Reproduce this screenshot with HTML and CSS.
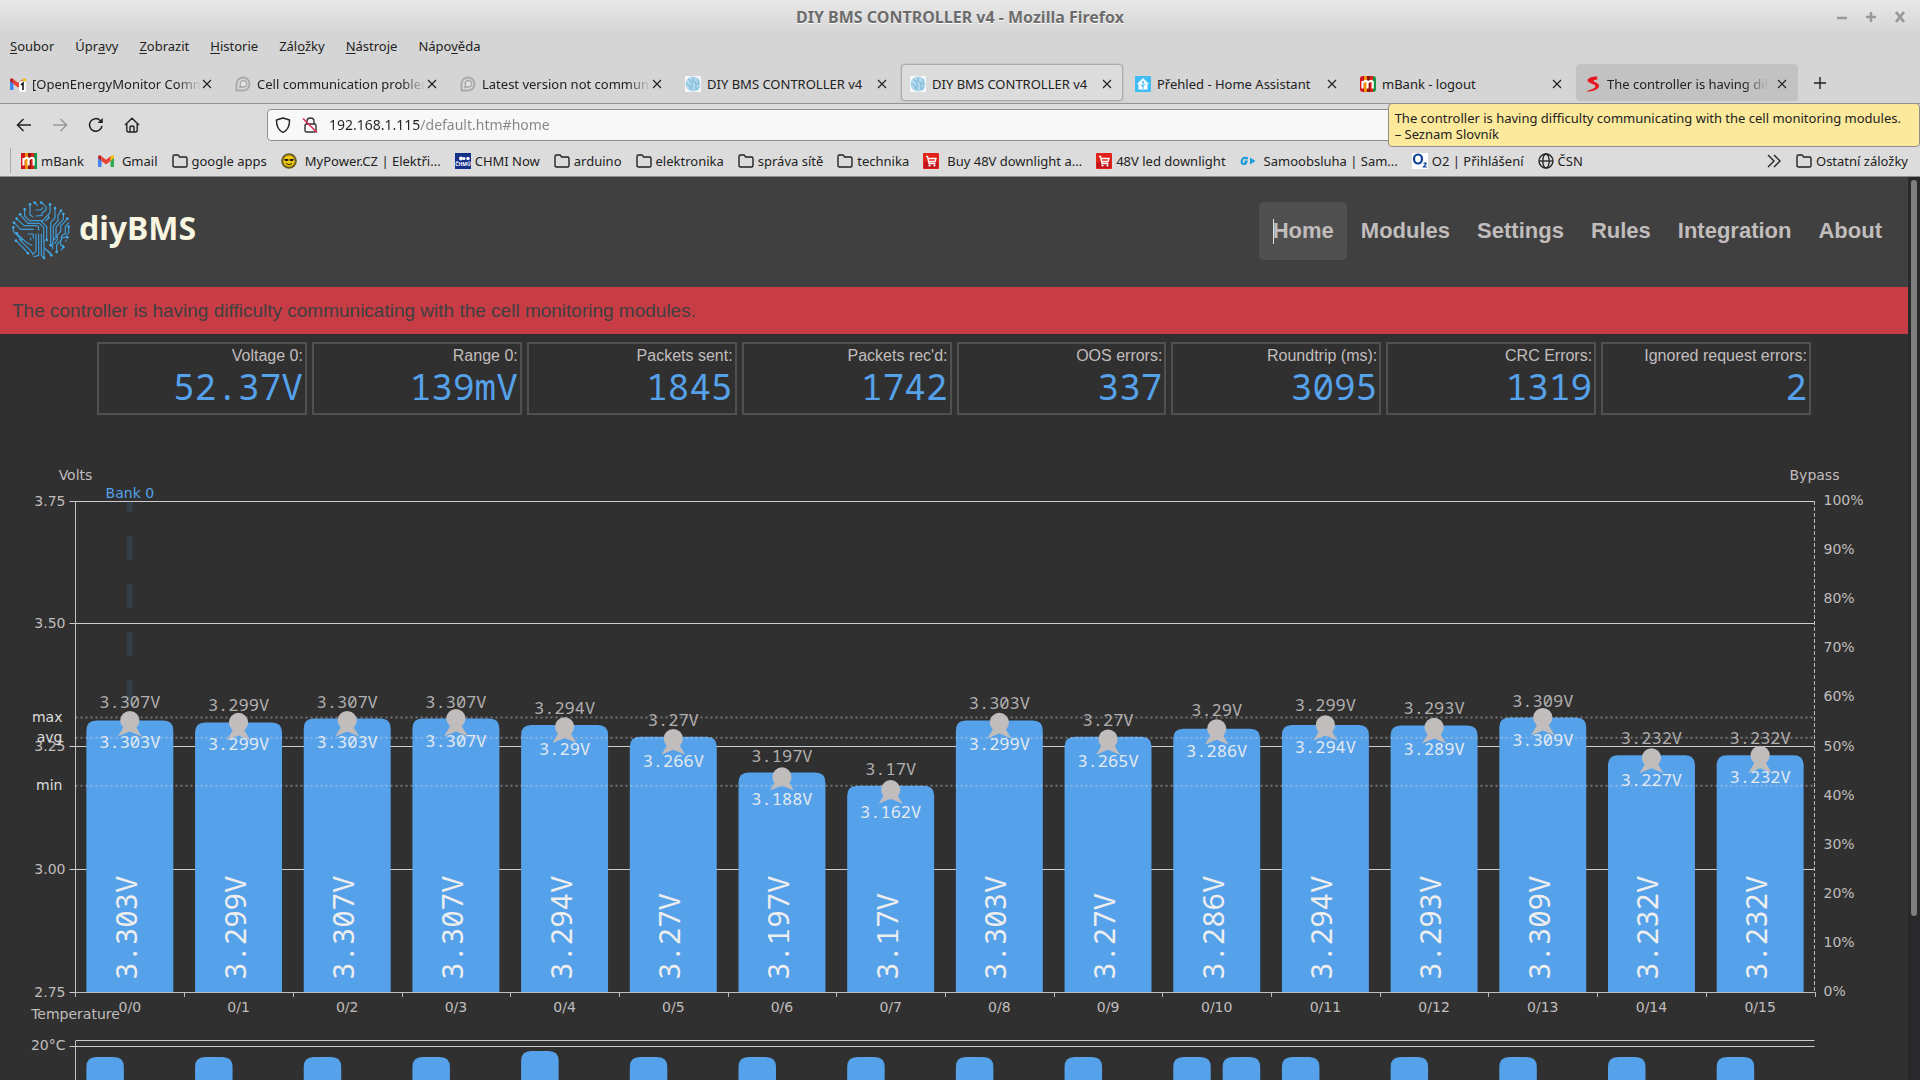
FILE: index.html
```html
<!DOCTYPE html>
<html lang="cs">
<head>
<meta charset="utf-8">
<title>DIY BMS CONTROLLER v4</title>
<link rel="stylesheet" href="styles.css">
</head>
<body>
<svg width="0" height="0" class="defs" aria-hidden="true">
  <symbol id="close" viewBox="0 0 16 16"><path d="M4 4l8 8M12 4l-8 8" fill="none" stroke="#222" stroke-width="1.2"/></symbol>
  <symbol id="folder" viewBox="0 0 16 16"><path d="M1 12.500V3.500Q1 2 2.500 2H5.500Q6.500 2 7 3L7.500 4H13.500Q15 4 15 5.500V12.500Q15 14 13.500 14H2.500Q1 14 1 12.500Z" fill="none" stroke="#222" stroke-width="1.400"/></symbol>
  <symbol id="gmail" viewBox="0 0 16 16"><path d="M0 3.500V14H3.500V7Z" fill="#4285f4"/><path d="M16 3.500V14H12.500V7Z" fill="#34a853"/><path d="M12.500 3.500L14 2.300Q16 2 16 4V5L12.500 8Z" fill="#fbbc04"/><path d="M3.500 3.200L8 6.700L12.500 3.200V8L8 11.400L3.500 8Z" fill="#ea4335"/><path d="M0 5V4Q0 2 2 2.300L3.500 3.200V8Z" fill="#c5221f"/></symbol>
  <symbol id="discourse" viewBox="0 0 16 16"><path d="M1.500 14.500V8A6.500 6.500 0 1 1 8 14.500Z" fill="#d8d8d8" stroke="#aaa" stroke-width="2"/><path d="M5 11.500L5.500 9A3.200 3.200 0 1 1 7.500 10.800Z" fill="#e4e4e4" stroke="#aaa" stroke-width="1.500"/></symbol>
  <symbol id="mbank" viewBox="0 0 16 16"><path d="M0 0H4V16H0Z" fill="#d3121f"/><path d="M4 0H7V16H4Z" fill="#f39200"/><path d="M7 0H10V16H7Z" fill="#8f1414"/><path d="M10 0H13V16H10Z" fill="#df2018"/><path d="M13 0H16V16H13Z" fill="#159447"/><path d="M2.500 12.500V5M2.500 7Q5.500 3.500 7.500 6V12.500M7.500 7Q10.500 3.500 12.700 6V12.500" fill="none" stroke="#fff" stroke-width="2.200"/></symbol>
  <symbol id="cart" viewBox="0 0 16 16"><rect width="16" height="16" rx="1" fill="#e2231a"/><path d="M1 9H15V15H1Z" fill="#c3161c"/><path d="M3 3.500H4.500L6 10.500H12.500M5 5.500H13L12 8.500H6" fill="none" stroke="#fff" stroke-width="1.300"/><circle cx="6.500" cy="12.500" r="1.100" fill="#fff"/><circle cx="11.500" cy="12.500" r="1.100" fill="#fff"/></symbol>
  <symbol id="circuit" viewBox="34 30 178 180">
    <g fill="none" stroke="#3f9bd6" stroke-width="3.600" stroke-linejoin="round" stroke-linecap="round">
      <path d="M90 43V74L98 80M104 38L112 46M124 38L138 50V60L126 70V76L108 78M108 60H122L128 54M150 44V68L128 92H106M165 54V84L152 98V166M74 58V78L88 92H122L140 110V150M60 74L84 100H118L131 113V155M50 86L72 107H112L116 112V120M42 98L62 118H100M40 112V124L66 150M50 130L80 158L96 166M48 152L70 174L84 190M58 148L86 176L98 190M84 132H100V144M92 144V150M108 132V184L98 194M116 132V196M124 132V196L132 204M102 200L116 196M132 204V172L154 196M132 172V152M140 180L152 190M145 74V84L138 92M148 82L142 88M183 62L174 76V92L160 108V150M190 72V88L168 112V142L158 154V176M202 86L192 98L182 108V124L172 136V150L164 160M206 98L196 110V130L184 138V150L170 164V186M206 112V128L198 136M202 142H188L182 152V166H190M198 150V154M190 172L184 180"/>
    </g>
    <g fill="#43a9ea">
      <circle cx="90" cy="43" r="4"/><circle cx="104" cy="38" r="4"/><circle cx="124" cy="38" r="4"/><circle cx="150" cy="43" r="4"/><circle cx="165" cy="54" r="4"/><circle cx="74" cy="58" r="4"/><circle cx="60" cy="73" r="4"/><circle cx="50" cy="86" r="4"/><circle cx="42" cy="98" r="4"/><circle cx="40" cy="112" r="4"/><circle cx="50" cy="130" r="4"/><circle cx="48" cy="152" r="4"/><circle cx="183" cy="62" r="4"/><circle cx="190" cy="72" r="4"/><circle cx="202" cy="86" r="4"/><circle cx="206" cy="110" r="4"/><circle cx="202" cy="142" r="4"/><circle cx="190" cy="171" r="4"/><circle cx="170" cy="186" r="4"/><circle cx="154" cy="196" r="4"/><circle cx="132" cy="204" r="4"/><circle cx="84" cy="190" r="4"/><circle cx="152" cy="166" r="4"/><circle cx="140" cy="150" r="4"/>
    </g>
  </symbol>
  <symbol id="diybms" viewBox="0 0 16 16"><rect width="16" height="16" fill="#f4f8fa"/><circle cx="8" cy="8" r="7.500" fill="#b4d9ec"/><path d="M3 3L7 6V14M8 1V5L11 7V14M13 3V9M1 7L5 10V13M14 11L12 14" fill="none" stroke="#6fb3d8" stroke-width="1"/></symbol>
</svg>

<header class="chrome">
  <div class="titlebar">
    <span class="window-title">DIY BMS CONTROLLER v4 - Mozilla Firefox</span>
    <div class="window-buttons">
      <button aria-label="Minimalizovat"><svg width="12" height="14" viewBox="0 0 12 14"><path d="M1 8H11" stroke="#999" stroke-width="2.500"/></svg></button>
      <button aria-label="Maximalizovat"><svg width="12" height="14" viewBox="0 0 12 14"><path d="M1 7H11M6 2V12" stroke="#999" stroke-width="2.500"/></svg></button>
      <button aria-label="Zavřít"><svg width="12" height="14" viewBox="0 0 12 14"><path d="M2 2L10 12M10 2L2 12" stroke="#999" stroke-width="2.800"/></svg></button>
    </div>
  </div>

  <nav class="menubar" aria-label="Nabídka">
    <button><u>S</u>oubor</button><button>Úpr<u>a</u>vy</button><button><u>Z</u>obrazit</button><button><u>H</u>istorie</button><button>Zál<u>o</u>žky</button><button><u>N</u>ástroje</button><button>Nápo<u>v</u>ěda</button>
  </nav>

  <div class="tabs">
    <div class="tab"><svg class="icon"><use href="#gmail"/><rect x="9" y="5" width="7" height="11" rx="2" fill="#fff"/><path d="M11 9L13 7V14" fill="none" stroke="#111" stroke-width="1.500"/></svg><button class="tab-label fade tight">[OpenEnergyMonitor Community]</button><button class="tab-close" aria-label="Zavřít panel"><svg class="icon"><use href="#close"/></svg></button></div>
    <div class="tab"><svg class="icon"><use href="#discourse"/></svg><button class="tab-label fade tight">Cell communication problems</button><button class="tab-close" aria-label="Zavřít panel"><svg class="icon"><use href="#close"/></svg></button></div>
    <div class="tab"><svg class="icon"><use href="#discourse"/></svg><button class="tab-label fade tight">Latest version not communicating</button><button class="tab-close" aria-label="Zavřít panel"><svg class="icon"><use href="#close"/></svg></button></div>
    <div class="tab"><svg class="icon"><use href="#diybms"/></svg><button class="tab-label">DIY BMS CONTROLLER v4</button><button class="tab-close" aria-label="Zavřít panel"><svg class="icon"><use href="#close"/></svg></button></div>
    <div class="tab active"><svg class="icon"><use href="#diybms"/></svg><button class="tab-label">DIY BMS CONTROLLER v4</button><button class="tab-close" aria-label="Zavřít panel"><svg class="icon"><use href="#close"/></svg></button></div>
    <div class="tab"><svg class="icon"><rect width="16" height="16" rx="1" fill="#41bdf5"/><path d="M8 2L14 8H12.500V13.500H3.500V8H2Z" fill="#fff"/><path d="M8 13V6M8 11L5.500 8.500M8 10L10.500 8" stroke="#41bdf5" fill="none"/><circle cx="8" cy="6" r="1" fill="#41bdf5"/></svg><button class="tab-label">Přehled - Home Assistant</button><button class="tab-close" aria-label="Zavřít panel"><svg class="icon"><use href="#close"/></svg></button></div>
    <div class="tab"><svg class="icon round"><use href="#mbank"/></svg><button class="tab-label">mBank - logout</button><button class="tab-close" aria-label="Zavřít panel"><svg class="icon"><use href="#close"/></svg></button></div>
    <div class="tab hovered"><svg class="icon"><path d="M12 0.500C7 0.500 2.500 2 2.500 4.500C2.500 7 10 8 10.500 10C11 12.500 4 14 1 15.500C6 15.800 14.500 14 14 9.500C13.500 6.500 8 6 8.500 4.500C9 3.500 12 3.800 12.500 3.200Z" fill="#e8171f"/></svg><button class="tab-label fade">The controller is having difficulty</button><button class="tab-close" aria-label="Zavřít panel"><svg class="icon"><use href="#close"/></svg></button></div>
    <button class="new-tab" aria-label="Nový panel"><svg class="icon"><path d="M2 8H14M8 2V14" stroke="#222" stroke-width="1.400"/></svg></button>
  </div>

  <div class="toolbar">
    <div class="nav-buttons">
      <button aria-label="Zpět"><svg class="icon"><path d="M15 8H1.500M7.500 2L1.500 8L7.500 14" fill="none" stroke="#222" stroke-width="1.500"/></svg></button>
      <button aria-label="Vpřed"><svg class="icon"><path d="M1 8H14.500M8.500 2L14.500 8L8.500 14" fill="none" stroke="#999" stroke-width="1.500"/></svg></button>
      <button aria-label="Obnovit"><svg class="icon"><path d="M14 9A6.300 6.300 0 1 1 12.300 3.500L14 5" fill="none" stroke="#222" stroke-width="1.500"/><path d="M14.800 1V6H9.500Z" fill="#222"/></svg></button>
      <button aria-label="Domů"><svg class="icon"><path d="M1 8L8 1.200L15 8M2.800 7V13.500Q2.800 15 4.300 15H11.700Q13.200 15 13.200 13.500V7M6 15V10.500Q6 9 8 9Q10 9 10 10.500V15" fill="none" stroke="#222" stroke-width="1.400"/></svg></button>
    </div>
    <form class="urlbar">
      <svg class="icon" aria-hidden="true"><path d="M8 1L14.500 3Q14.800 12 8 15.500Q1.200 12 1.500 3Z" fill="none" stroke="#222" stroke-width="1.400" stroke-linejoin="round"/></svg>
      <svg class="icon" aria-hidden="true"><rect x="3" y="7" width="11" height="8" rx="1.500" fill="none" stroke="#333" stroke-width="1.400"/><path d="M5 7V4.500Q5 1 8.500 1Q12 1 12 4.500V7" fill="none" stroke="#333" stroke-width="1.400"/><path d="M1 1.500L15 15.500" stroke="#e22850" stroke-width="1.500"/></svg>
      <input type="text" aria-label="Adresa" value="192.168.1.115/default.htm#home">
    </form>
  </div>

  <nav class="bookmarks" aria-label="Záložky">
    <a href="#"><svg class="icon"><use href="#mbank"/></svg>mBank</a>
    <a href="#" class="wide"><svg class="icon"><use href="#gmail"/></svg>Gmail</a>
    <a href="#"><svg class="icon"><use href="#folder"/></svg>google apps</a>
    <a href="#" class="wide"><svg class="icon"><circle cx="8" cy="8" r="7.800" fill="#6b5e20"/><circle cx="8" cy="8" r="5.800" fill="#f2c80f"/><path d="M3 6H7.300V8H4ZM8.700 6H13L12 8H8.700Z" fill="#222"/><path d="M5 10.500Q8 13 11 10.500" fill="none" stroke="#222"/></svg>MyPower.CZ | Elektři...</a>
    <a href="#"><svg class="icon"><rect width="16" height="16" fill="#14308a"/><circle cx="6" cy="5.500" r="2" fill="#fff"/><circle cx="9" cy="5.500" r="1.500" fill="#fff"/><circle cx="13" cy="5.500" r="1.700" fill="#fff"/><text x="8" y="13" text-anchor="middle" class="tiny">ČHMÚ</text></svg>CHMI Now</a>
    <a href="#"><svg class="icon"><use href="#folder"/></svg>arduino</a>
    <a href="#"><svg class="icon"><use href="#folder"/></svg>elektronika</a>
    <a href="#"><svg class="icon"><use href="#folder"/></svg>správa sítě</a>
    <a href="#"><svg class="icon"><use href="#folder"/></svg>technika</a>
    <a href="#" class="wide"><svg class="icon"><use href="#cart"/></svg>Buy 48V downlight a...</a>
    <a href="#"><svg class="icon"><use href="#cart"/></svg>48V led downlight</a>
    <a href="#" class="wide"><svg class="icon"><path d="M8 5.500Q3 3.500 1.800 7.500Q1 11 4 11Q6 11 6.500 8.500H4.500" fill="none" stroke="#1b9ddb" stroke-width="2.200"/><path d="M10 4.500L15.500 8L10 11.500Z" fill="#1b9ddb"/></svg>Samoobsluha | Sam...</a>
    <a href="#"><svg class="icon"><rect width="16" height="16" fill="#fff"/><ellipse cx="6" cy="6" rx="4" ry="4.500" fill="none" stroke="#0b3f9a" stroke-width="2.200"/><path d="M11.500 10.500Q14.500 9 14 11L11.500 14H15" fill="none" stroke="#0b3f9a" stroke-width="1.200"/></svg>O2 | Přihlášení</a>
    <a href="#"><svg class="icon"><g fill="none" stroke="#222" stroke-width="1.300"><circle cx="8" cy="8" r="7"/><ellipse cx="8" cy="8" rx="3.200" ry="7"/><path d="M1 8H15"/></g></svg>ČSN</a>
    <button class="more" aria-label="Další záložky"><svg class="icon"><path d="M2 2L8 8L2 14M8 2L14 8L8 14" fill="none" stroke="#222" stroke-width="1.400"/></svg></button>
    <a href="#"><svg class="icon"><use href="#folder"/></svg>Ostatní záložky</a>
  </nav>
  <div class="tooltip" role="tooltip">The controller is having difficulty communicating with the cell monitoring modules.<br>– Seznam Slovník</div>
</header>

<div class="viewport">
  <main class="page">
    <div class="page-header">
      <a href="#home" class="brand"><svg width="60" height="60"><use href="#circuit"/></svg><span>diyBMS</span></a>
      <nav class="page-nav">
        <a href="#home" class="current">Home</a><a href="#modules">Modules</a><a href="#settings">Settings</a><a href="#rules">Rules</a><a href="#integration">Integration</a><a href="#about">About</a>
      </nav>
    </div>
    <p class="alert" role="alert">The controller is having difficulty communicating with the cell monitoring modules.</p>
    <dl class="stats">
      <div><dt>Voltage 0:</dt><dd>52.37V</dd></div>
      <div><dt>Range 0:</dt><dd>139mV</dd></div>
      <div><dt>Packets sent:</dt><dd>1845</dd></div>
      <div><dt>Packets rec'd:</dt><dd>1742</dd></div>
      <div><dt>OOS errors:</dt><dd>337</dd></div>
      <div><dt>Roundtrip (ms):</dt><dd>3095</dd></div>
      <div><dt>CRC Errors:</dt><dd>1319</dd></div>
      <div><dt>Ignored request errors:</dt><dd>2</dd></div>
    </dl>
    <svg id="chart" class="chart" role="img" aria-label="Cell voltages"></svg>
  </main>
  <div class="scrollbar"><div class="thumb"></div></div>
</div>
<script src="chart.js"></script>
</body>
</html>
```
FILE: styles.css
```css
* { box-sizing: border-box; }
body {
  margin: 0;
  height: 100vh;
  display: flex;
  flex-direction: column;
  overflow: hidden;
  background: #303030;
  font-family: "Liberation Sans", sans-serif;
}
button { border: 0; padding: 0; background: none; font: inherit; color: inherit; }
a { color: inherit; text-decoration: none; }
.defs { position: absolute; }
.icon { width: 16px; height: 16px; flex: none; display: block; }
.round { border-radius: 3px; }
.tiny { font: bold 5px "Noto Sans", sans-serif; fill: #fff; }

/* Browser window */
.chrome {
  position: relative;
  flex: none;
  background: #d5d5d5;
  color: #222;
  font-family: "Noto Sans", sans-serif;
  font-size: 13px;
  border-bottom: 1px solid #8f8f8f;
}
.titlebar {
  display: grid;
  grid-template-columns: 1fr auto 1fr;
  align-items: center;
  height: 34px;
  padding: 0 14px;
  background: linear-gradient(#e8e8e8, #d5d5d5);
}
.window-title {
  grid-column: 2;
  font-size: 16px;
  font-weight: bold;
  color: #6c6c6c;
  text-shadow: 0 1px 0 #fff;
}
.window-buttons { display: flex; gap: 17px; justify-content: flex-end; }
.window-buttons button { display: flex; }
.menubar { display: flex; gap: 21px; height: 26px; padding: 0 10px 2px; align-items: center; }
.menubar u { text-underline-offset: 2px; }
.tabs { display: flex; gap: 3px; height: 44px; padding: 4px 0 2px 1px; border-bottom: 1px solid #949494; }
.tab {
  flex: 0 1 222px;
  min-width: 0;
  display: flex;
  align-items: center;
  gap: 6px;
  padding: 2px 7px 0 8px;
  border: 1px solid transparent;
  border-radius: 4px;
}
.tab.active { background: #dcdcdc; border-color: #a9a9b0; box-shadow: 0 0 2px #aaa; }
.tab.hovered { background: #c2c2c2; }
.tab-label {
  flex: 1;
  min-width: 0;
  overflow: hidden;
  white-space: nowrap;
  text-align: left;
}
.tab-label.fade { mask-image: linear-gradient(to left, transparent, #000 24px); }
.tab-label.tight { margin-right: -8px; }
.new-tab { display: grid; place-items: center; width: 38px; }
.toolbar { display: flex; align-items: center; height: 41px; padding: 0 14px 0 16px; background: #dcdcdc; }
.nav-buttons { display: flex; gap: 20px; flex: none; width: 251px; }
.urlbar {
  flex: 1;
  display: flex;
  align-items: center;
  gap: 11px;
  height: 32px;
  margin: 0 252px 0 0;
  padding: 0 7px;
  background: #f8f8f8;
  border: 1px solid #8f8f8f;
  border-radius: 4px;
}
.urlbar input {
  flex: 1;
  border: 0;
  padding: 0;
  outline: 0;
  font: 14px "Noto Sans", sans-serif;
  color: transparent;
  background: linear-gradient(to right, #222 91px, #858585 91px) text;
}
.bookmarks {
  display: flex;
  align-items: center;
  gap: 14px;
  height: 31px;
  padding: 0 12px 0 10px;
  background: #dcdcdc;
  white-space: nowrap;
}
.bookmarks::before { content: ""; width: 1px; height: 25px; margin-right: -4px; background: #aaa; }
.bookmarks a { display: flex; align-items: center; gap: 4px; }
.bookmarks a.wide { gap: 8px; }
.more { margin-left: auto; }
.tooltip {
  position: absolute;
  z-index: 2;
  top: 103px;
  right: 0;
  padding: 6px 18px 4px 6px;
  line-height: 16px;
  color: #222;
  background: #fce99b;
  border: 1px solid #8f8f8f;
  border-radius: 4px;
}

/* diyBMS page */
.viewport { flex: 1; min-height: 0; display: flex; }
.page { flex: 1; min-width: 0; overflow: hidden; color: #c1bdbd; }
.page-header {
  display: flex;
  align-items: center;
  justify-content: space-between;
  height: 110px;
  padding: 0 13px 2px 11px;
  background: #404040;
}
.brand {
  display: flex;
  align-items: center;
  gap: 8px;
  padding-bottom: 2px;
  font: bold 32px/54px "Noto Sans", sans-serif;
  color: #f8f5e1;
}
.brand span { padding-bottom: 4px; }
.page-nav { display: flex; font-size: 22px; font-weight: bold; }
.page-nav a { position: relative; padding: 0 13px 0 14px; line-height: 58px; border-radius: 5px; }
.page-nav .current { background: #505050; }
.page-nav .current::before {
  content: "";
  position: absolute;
  left: 14px;
  top: 17px;
  width: 1px;
  height: 25px;
  background: #ddd;
}
.alert { margin: 0; padding: 0 12px; font-size: 19px; line-height: 47px; color: #404040; background: #c83c45; }
.stats { display: flex; gap: 5px; margin: 0; padding: 8px 97px 0; }
.stats div { flex: 1; height: 73px; padding: 3px 2px; border: 2px solid #505050; text-align: right; }
.stats dt { font-size: 16px; line-height: 18px; }
.stats dd { margin: 0; font: 36px/44px "Noto Sans Mono", monospace; color: #55a1ea; }
.chart { display: block; width: 100%; height: 800px; }
.chart .axis { font: 14px "DejaVu Sans", sans-serif; fill: #c1bdbd; }
.chart .mark { fill: #ddd; }
.chart .bank, .chart .bar { fill: #55a1ea; }
.chart .line { stroke: #c1bdbd; stroke-width: 1; }
.chart .grid { stroke: #ccc; stroke-width: 1; }
.chart .dotted { stroke: #ddd; stroke-opacity: 0.4; stroke-width: 2; stroke-dasharray: 2 3; }
.chart .dashed { stroke: #c1bdbd; stroke-dasharray: 4 2; }
.chart .bankline { stroke: #55a1ea; stroke-opacity: 0.12; stroke-width: 6; stroke-dasharray: 24 24; }
.chart .symbol { fill: #c1bdbd; }
.chart .value { font: 17px "Noto Sans Mono", monospace; text-anchor: middle; fill: #b2afaf; }
.chart .low { fill: #e4eaf0; }
.chart .big { font: 29px "Noto Sans Mono", monospace; fill: #eee; }
.chart .middle { text-anchor: middle; }
.chart .end { text-anchor: end; }
.scrollbar { flex: none; width: 12px; padding: 3px; background: #29292b; }
.thumb { height: 82%; border-radius: 3px; background: #7f7f7f; }
```
FILE: chart.js
```js
// [cell voltage, lowest seen, highest seen]
const cells = [
  [3.303, 3.303, 3.307], [3.299, 3.299, 3.299], [3.307, 3.303, 3.307], [3.307, 3.307, 3.307],
  [3.294, 3.29, 3.294], [3.27, 3.266, 3.27], [3.197, 3.188, 3.197], [3.17, 3.162, 3.17],
  [3.303, 3.299, 3.303], [3.27, 3.265, 3.27], [3.286, 3.286, 3.29], [3.294, 3.294, 3.299],
  [3.293, 3.289, 3.293], [3.309, 3.309, 3.309], [3.232, 3.227, 3.232], [3.232, 3.232, 3.232]
];
const chart = document.getElementById('chart');
const TOP = 86, BOTTOM = 577, TEMP_TOP = 626, TEMP_20 = 631;

function draw() {
  const width = chart.clientWidth;
  const left = Math.round(width * 0.04) - 0.5;
  const right = Math.round(width * 0.951) - 0.5;
  const step = (right - left) / cells.length;
  const y = v => BOTTOM - (v - 2.75) * (BOTTOM - TOP);
  const out = [];
  const line = (cls, x1, y1, x2, y2) => out.push(`<line class="${cls}" x1="${x1}" y1="${y1}" x2="${x2}" y2="${y2}"/>`);
  const text = (cls, x, yy, s) => out.push(`<text class="${cls}" x="${x}" y="${yy}">${s}</text>`);
  const bar = (x, top, w, bottom) => out.push(`<path class="bar" d="M${x} ${bottom}V${top + 10}q0-10 10-10h${w - 20}q10 0 10 10V${bottom}z"/>`);

  [2.75, 3, 3.25, 3.5, 3.75].forEach(v => {
    const gy = Math.floor(y(v)) + 0.5;
    line('grid', left - 6, gy, right, gy);
    text('axis end', left - 10, gy + 4, v.toFixed(2));
  });
  for (let p = 0; p <= 100; p += 10) {
    text('axis', right + 9, BOTTOM - p * (BOTTOM - TOP) / 100 + 4, p + '%');
  }
  text('axis middle', left, 65, 'Volts');
  text('axis middle', right, 65, 'Bypass');
  text('axis middle', left, 604, 'Temperature');
  line('bankline', left + step / 2, BOTTOM, left + step / 2, TOP);
  text('axis bank middle', left + step / 2, 83, 'Bank 0');

  cells.forEach((c, i) => bar(left + step * (i + 0.1), y(c[0]), step * 0.8, BOTTOM));
  line('line', left, BOTTOM + 0.5, right, BOTTOM + 0.5);
  line('line', left, TOP, left, BOTTOM + 5);
  line('line dashed', right, TOP, right, BOTTOM);

  [['max', 3.309], ['avg', 3.268], ['min', 3.17]].forEach(([name, v]) => {
    line('dotted', left, y(v), right, y(v));
    text('axis mark end', left - 13, y(v) + 4, name);
  });

  cells.forEach(([v, lo, hi], i) => {
    const x = left + step * (i + 0.5);
    const edge = Math.round(left + step * (i + 1)) + 0.5;
    line('line', edge, BOTTOM, edge, BOTTOM + 5);
    out.push(`<circle class="symbol" cx="${x}" cy="${y(lo)}" r="9.6"/>`);
    out.push(`<path class="symbol" d="M${x} ${y(hi) - 2}l12 20l-12-5l-12 5z"/>`);
    text('value', x, y(hi) - 11, hi + 'V');
    text('value low', x, y(lo) + 28, lo + 'V');
    out.push(`<text class="big" transform="translate(${x + 7} 565) rotate(-90)">${v}V</text>`);
    text('axis middle', x, 597, '0/' + i);
  });

  line('grid', left, TEMP_TOP - 0.5, right, TEMP_TOP - 0.5);
  line('grid', left - 6, TEMP_20 + 0.5, right, TEMP_20 + 0.5);
  line('line', left, TEMP_TOP, left, 800);
  text('axis end', left - 10, TEMP_20 + 4, '20°C');
  cells.forEach((c, i) => {
    bar(left + step * (i + 0.1), i === 4 ? 636 : 642, step * 0.345, 800);
    if (i === 10) bar(left + step * (i + 0.555), 642, step * 0.345, 800);
  });
  chart.innerHTML = out.join('');
}
draw();
window.addEventListener('resize', draw);
```
